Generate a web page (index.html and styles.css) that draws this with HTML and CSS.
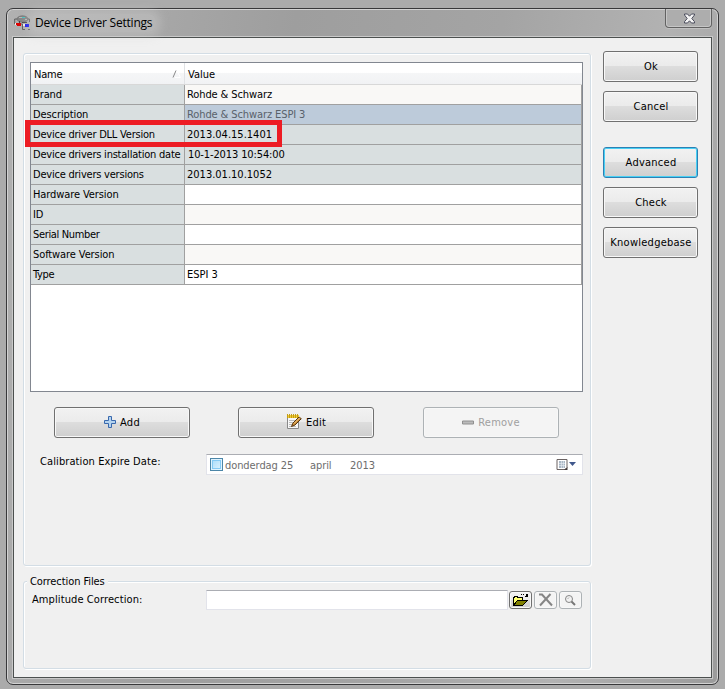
FILE: index.html
```html
<!DOCTYPE html>
<html lang="en">
<head>
<meta charset="utf-8">
<title>Device Driver Settings</title>
<link rel="stylesheet" href="styles.css">
</head>
<body>
<div class="window">
  <header class="titlebar">
    <svg class="app-icon" width="17" height="16" viewBox="0 0 17 16">
      <ellipse cx="8.500" cy="4" rx="5.500" ry="3.200" fill="#858585" stroke="#666" stroke-width=".6"/>
      <path fill="#b5b5b5" d="M5 2h3v1H5zM11 4h2v1h-2z"/>
      <path fill="#43c5c5" d="M8 2h3v1H8z"/>
      <path d="M3 4H.7v5H2M14 4h1.500v3M7 9h1.500v5.500H11M14 14.500h2" stroke="#555" stroke-width=".9" fill="none"/>
      <path fill="#d00" d="M3 8h4v3H3zM2 8h1v2H2z"/>
      <path fill="#eee" d="M1 8h1v2H1zM9 9h2v2H9z"/>
      <path fill="#11e" d="M11 9h4v3h-4z"/>
      <path fill="#444" d="M5 6h1v2H5zM8 7h5v1H8z"/>
    </svg>
    <h1>Device Driver Settings</h1>
    <button class="close" aria-label="Close">
      <svg width="13" height="11" viewBox="0 0 13 11"><path d="M1.500 1h3l2 2.200 2-2.200h3v1L8.800 5.500l2.700 3.200V10h-3l-2-2.200-2 2.200h-3V8.700l2.700-3.200L1.500 2z" fill="#f4f4f4" stroke="#4a4c5c"/></svg>
    </button>
  </header>
  <main class="client">
    <div class="left">
      <section class="group properties">
        <div class="grid">
          <div class="grid-head"><div class="name">Name
            <svg width="12" height="8" viewBox="0 0 12 8"><path d="M1 7.500 4 .5" stroke="#888" fill="none"/><path d="M5 1l3.500 6.500H3" stroke="#fff" fill="none"/></svg></div><div class="head-value">Value</div></div>
          <div class="row alt"><div class="name">Brand</div><div class="value">Rohde &amp; Schwarz</div></div>
          <div class="row selected"><div class="name">Description</div><div class="value">Rohde &amp; Schwarz ESPI 3</div></div>
          <div class="row locked"><div class="name tight">Device driver DLL Version</div><div class="value num">2013.04.15.1401</div><div class="highlight"></div></div>
          <div class="row locked"><div class="name tight">Device drivers installation date</div><div class="value num date">10-1-2013 10:54:00</div></div>
          <div class="row locked"><div class="name tight">Device drivers versions</div><div class="value num">2013.01.10.1052</div></div>
          <div class="row"><div class="name">Hardware Version</div><div class="value"></div></div>
          <div class="row alt"><div class="name">ID</div><div class="value"></div></div>
          <div class="row"><div class="name serial">Serial Number</div><div class="value"></div></div>
          <div class="row alt"><div class="name">Software Version</div><div class="value"></div></div>
          <div class="row"><div class="name serial">Type</div><div class="value num">ESPI 3</div></div>
        </div>
        <div class="actions">
          <button class="btn"><svg width="12" height="12" viewBox="0 0 12 12"><path d="M4.500.5h3v4h4v3h-4v4h-3v-4h-4v-3h4z" fill="#b4d3ef" stroke="#3868ad"/></svg>Add</button>
          <button class="btn"><svg class="note" width="16" height="16" viewBox="0 0 16 16"><path d="M1.500 2.500h11v12h-11z" fill="#f7f7f7" stroke="#888"/><path d="M3 6.500h8M3 8.500h7M3 10.500h6M3 12.500h7" stroke="#bbb"/><path d="M1 1h12v3H1z" fill="#f0ca32"/><path d="M1.500 0v4M3.500 0v4M5.500 0v4M7.500 0v4M9.500 0v4M11.500 0v4" stroke="#c39c14"/><path d="M5.500 12.500 7 9l6-6 2.300 1.700-6.300 6.300z" fill="#c98c35" stroke="#573510"/><path d="m8 9.500 6-6" stroke="#f0c98a"/></svg>Edit</button>
          <button class="btn disabled"><svg width="12" height="5" viewBox="0 0 12 5"><path d="M.5 1h11v3H.5z" fill="#bbb" stroke="#909090"/></svg>Remove</button>
        </div>
        <div class="calibration">
          <label>Calibration Expire Date:</label>
          <div class="datebox">
            <span class="check"></span><span class="day">donderdag 25</span><span class="month">april</span><span class="year">2013</span>
            <svg width="22" height="14" viewBox="0 0 22 14"><path d="M1 1.500h10v8l-2 2H1z" fill="#fff" stroke="#6a6262"/><path d="M3 3h6v7H3z" fill="#a9b7c5"/><path d="M5.500 3v7M7.500 3v7M3 5.500h6M3 7.500h6" stroke="#e9eef3" stroke-width=".6"/><path d="M8 12h3.500V9z" fill="#443c3c"/><path d="M13 4h7l-3.500 4z" fill="#40588c"/></svg>
          </div>
        </div>
      </section>
      <section class="group corrections">
        <h2>Correction Files</h2>
        <div class="amp-row">
          <label>Amplitude Correction:</label>
          <div class="textbox"></div>
          <button class="tool"><svg width="17" height="14" viewBox="0 0 17 14" shape-rendering="crispEdges"><path d="M1 4h1V3h4v1h5v3h5v1h-1v1h-1v1h-1v1h-1v1h-1v1H1z" fill="#000"/><path d="M2 5h1V4h2v1h5v2H5v1H4v1H3v1H2z" fill="#ffff70"/><path d="M5 8h9v1h-1v1h-1v1h-1v1H3v-1h1V9h1z" fill="#808000"/><path d="M9 1h1v1H9zM11 1h1v1h-1zM13 2h1V1h2v3h-3V3h1z"/></svg></button>
          <button class="tool off"><svg width="15" height="14" viewBox="0 0 15 14"><path d="M1 1.500h3L14 12.500M12.500 1 2 12.500" stroke="#858585" stroke-width="2" fill="none"/></svg></button>
          <button class="tool off"><svg width="13" height="13" viewBox="0 0 13 13"><circle cx="5" cy="5" r="3.500" fill="#f2f2f2" stroke="#858585"/><path d="M3.500 5 5 3.500" stroke="#aaa"/><path d="m7.500 7.500 3.500 3.500" stroke="#777" stroke-width="2"/></svg></button>
        </div>
      </section>
    </div>
    <aside class="side">
      <button class="btn">Ok</button>
      <button class="btn">Cancel</button>
      <button class="btn focus">Advanced</button>
      <button class="btn">Check</button>
      <button class="btn">Knowledgebase</button>
    </aside>
  </main>
</div>
</body>
</html>
```
FILE: styles.css
```css
* { box-sizing: border-box; }
body {
  margin: 0;
  padding: 8px 6px 4px;
  height: 689px;
  overflow: hidden;
  background: #ababab;
  font: 11px/13px "DejaVu Sans Condensed", "DejaVu Sans", sans-serif;
  font-stretch: condensed;
  color: #000;
}
button { font: inherit; color: inherit; padding: 0; }
.window {
  width: 713px;
  height: 677px;
  border: 1px solid #38383a;
  border-radius: 7px;
  box-shadow: inset 0 0 0 1px #d2d2d2;
  background: linear-gradient(100deg, #b1b1b1 0, #9e9e9e 35%, #a4a4a4 60%, #b2b2b2 80%, #9b9b9b 100%);
  padding: 0 6px 6px;
}
.titlebar { display: flex; height: 28px; padding-left: 1px; }
.app-icon { margin-top: 6px; }
h1 {
  margin: 5px 0 0;
  padding: 0 4px;
  height: 18px;
  font: 12px/18px "Open Sans", sans-serif;
  letter-spacing: -.21px;
  border-radius: 8px;
  background: rgba(210, 210, 210, .35);
  box-shadow: 0 0 8px 5px rgba(210, 210, 210, .35);
}
.close {
  width: 47px;
  height: 19px;
  margin-left: auto;
  border: 1px solid #626262;
  border-top: 0;
  border-radius: 0 0 4px 4px;
  background: #adadad;
  box-shadow: inset 0 0 0 1px #c6c6c6, 0 1px 0 0 #c0c0c0;
  display: flex;
  justify-content: center;
  padding: 4px 0 0 2px;
}
.client {
  display: flex;
  justify-content: space-between;
  height: 641px;
  border: 1px solid #4c504f;
  box-shadow: 0 0 0 1px #c9c9c9;
  background: #f0f0f0;
  padding: 15px 13px 0 9px;
}
.left { width: 568px; }
.group {
  border: 1px solid #d3dde5;
  border-radius: 3px;
  box-shadow: inset 1px 1px #fff, 1px 1px #fff;
}
.properties { height: 513px; padding: 8px 7px 0 6px; }
.grid { height: 330px; border: 1px solid #828790; background: #fff; }
.grid-head {
  display: flex;
  height: 22px;
  border-bottom: 1px solid #d8d8d8;
  background: linear-gradient(#fff 45%, #f5f6f7 50%, #f1f2f4);
  line-height: 23px;
}
.head-value { padding-left: 3px; }
.grid-head .name {
  display: flex;
  justify-content: space-between;
  width: 154px;
  padding-left: 3px;
  border-right: 1px solid #e0e2e5;
  letter-spacing: -.2px;
}
.grid-head svg { margin-top: 7px; }
.row {
  position: relative;
  display: flex;
  height: 20px;
  border-bottom: 1px solid #a0a0a0;
  line-height: 19px;
  white-space: nowrap;
}
.row .name {
  width: 154px;
  padding-left: 2px;
  background: #d9dfe0;
  border-right: 1px solid #a0a0a0;
  letter-spacing: -.1px;
}
.row .tight { letter-spacing: -.22px; }
.row .serial { letter-spacing: -.35px; }
.value {
  flex: 1;
  padding-left: 2px;
  background: #fff;
  border-right: 1px solid #a0a0a0;
  letter-spacing: -.1px;
}
.value.num { letter-spacing: 0; }
.value.date { padding-left: 3px; letter-spacing: -.12px; }
.alt .value { background: #f9f8f6; }
.locked .value { background: #d9dfe0; }
.selected .value { background: #bdcbda; color: #59616a; }
.highlight {
  position: absolute;
  z-index: 1;
  left: -6px;
  top: -5px;
  width: 257px;
  height: 27px;
  border: 5px solid #ed1c24;
}
.btn {
  display: flex;
  align-items: center;
  justify-content: center;
  gap: 4px;
  width: 136px;
  height: 31px;
  padding-bottom: 1px;
  border: 1px solid #707070;
  border-radius: 3px;
  background: linear-gradient(#f2f2f2, #ebebeb 49%, #dddddd 50%, #cfcfcf);
  box-shadow: inset 0 0 0 1px #f8f8f8;
  letter-spacing: .25px;
}
.btn.focus { border-color: #2c80b4; box-shadow: inset 0 0 0 1px #48d0f4; }
.btn.disabled { border-color: #adb2b5; background: #f4f4f4; color: #a0a0a0; }
.actions { display: flex; gap: 48px; padding: 15px 0 0 24px; }
.actions .disabled { margin-left: 1px; }
.calibration { display: flex; padding: 16px 0 0 10px; }
.calibration label, .amp-row label { letter-spacing: .1px; }
.calibration label { width: 166px; padding-top: 1px; }
.datebox {
  display: flex;
  align-items: center;
  flex: 1;
  height: 21px;
  padding: 0 4px 0 3px;
  border: 1px solid #e2e3ea;
  border-top-color: #abadb3;
  background: #fff;
  color: #6d6d6d;
  line-height: 15px;
}
.datebox span { padding-top: 1px; letter-spacing: -.08px; }
.check { width: 13px; height: 13px; margin-right: 2px; border: 1px solid #4c86a8; background: linear-gradient(135deg, #a5dafa, #e2f5ff); box-shadow: inset 0 0 0 1px #dff3ff, inset 0 0 0 2px #84caf5; }
.day { width: 85px; }
.month { width: 40px; }
.datebox svg { margin-left: auto; }
.corrections { position: relative; height: 88px; margin-top: 15px; padding: 8px 7px 0 8px; }
h2 {
  position: absolute;
  left: 3px;
  top: -7px;
  margin: 0;
  padding: 0 3px;
  background: #f0f0f0;
  font: inherit;
  letter-spacing: -.08px;
}
.amp-row { display: flex; align-items: center; }
.amp-row label { width: 174px; padding-bottom: 2px; }
.textbox { width: 302px; height: 20px; border: 1px solid #e2e3ea; border-top-color: #abadb3; background: #fff; }
.tool {
  display: flex;
  align-items: center;
  justify-content: center;
  width: 23px;
  height: 18px;
  margin-left: 1px;
  border: 1px solid #707070;
  border-radius: 3px;
  background: linear-gradient(#f2f2f2, #ebebeb 49%, #dddddd 50%, #cfcfcf);
  box-shadow: inset 0 0 0 1px #f8f8f8;
}
.tool + .tool { margin-left: 2px; }
.tool.off { border-color: #adb2b5; background: #f4f4f4; }
.side { display: flex; flex-direction: column; gap: 9px; margin-top: -2px; }
.side .btn { width: 95px; padding-left: 1px; }
.side .focus { margin-top: 16px; }
```
